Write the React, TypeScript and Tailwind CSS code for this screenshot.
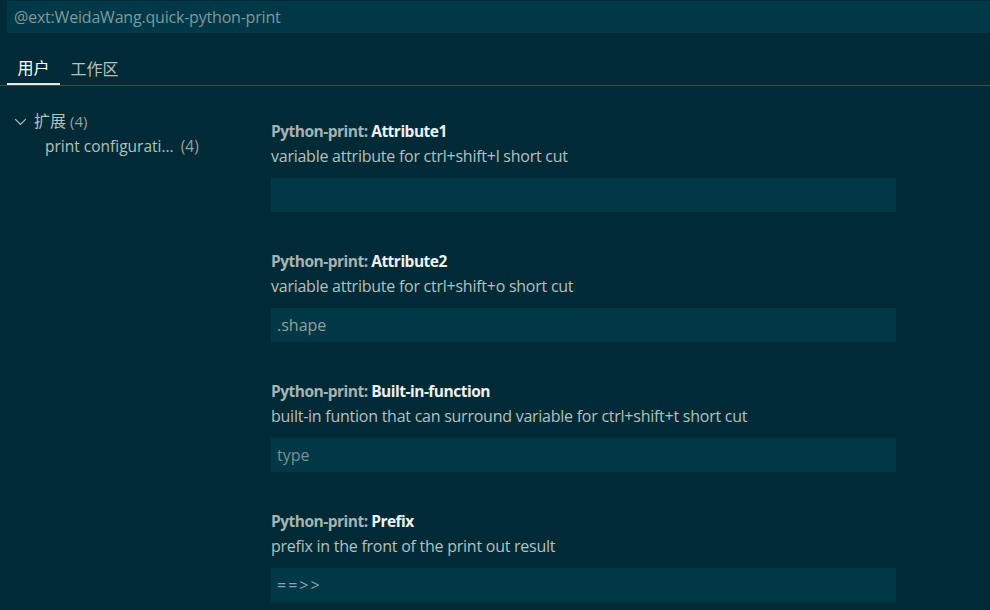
import React from 'react';

type Setting = {
  name: string;
  desc: string;
  value: string;
  placeholder?: boolean;
  mono?: boolean;
};

const SETTINGS: Setting[] = [
  { name: 'Attribute1', desc: 'variable attribute for ctrl+shift+l short cut', value: '' },
  { name: 'Attribute2', desc: 'variable attribute for ctrl+shift+o short cut', value: '.shape' },
  {
    name: 'Built-in-function',
    desc: 'built-in funtion that can surround variable for ctrl+shift+t short cut',
    value: 'type',
    placeholder: true,
  },
  { name: 'Prefix', desc: 'prefix in the front of the print out result', value: '==>>', mono: true },
];

const font = "font-['Open_Sans','Noto_Sans_CJK_SC',sans-serif]";

const App: React.FC = () => {
  return (
    <div className={`w-[990px] h-[610px] overflow-hidden bg-[#002b36] ${font} text-[16px]`}>
      {/* search */}
      <div className="pt-px pl-[7px]">
        <div className="h-[32px] bg-[#003847] flex items-center pl-[7px] text-[#7f9a9a] text-[16px] tracking-[-0.2px]">
          @ext:WeidaWang.quick-python-print
        </div>
      </div>

      {/* tabs */}
      <div className="mt-[19px] h-[34px] border-b border-[#4a4a4a] flex pl-[7px] text-[16px]">
        <div className="px-[10.5px] flex items-center h-full border-b-2 border-[#e6e6e6] -mb-px text-[#ffffff]">用户</div>
        <div className="px-[10.5px] flex items-center h-full text-[#b5c0c0]">工作区</div>
      </div>

      <div className="flex">
        {/* tree */}
        <div className="w-[271px] shrink-0 pt-[22px] text-[#b5c0c0]">
          <div className="h-[26px] flex items-center pl-[14px]">
            <svg width="13" height="13" viewBox="0 0 16 16" className="mr-[7px]">
              <path d="M1.5 5 L8 11.5 L14.5 5" fill="none" stroke="#b5c0c0" strokeWidth="1.5" />
            </svg>
            <span>扩展</span>
            <span className="ml-[4px] text-[#93a1a1] text-[15px]">(4)</span>
          </div>
          <div className="h-[26px] flex items-center pl-[45px] text-[15.5px]">
            <span>print configurati...</span>
            <span className="ml-[7px] text-[#93a1a1]">(4)</span>
          </div>
        </div>

        {/* settings */}
        <div className="w-[625px] pt-[35px] flex flex-col gap-[39px]">
          {SETTINGS.map((s) => (
            <div key={s.name}>
              <div className="h-[22px] flex items-center font-bold tracking-[-0.5px] text-[15.5px]">
                <span className="text-[#a7b3b3]">Python-print:&nbsp;</span>
                <span className="text-[#f0f0f0]">{s.name}</span>
              </div>
              <div className="h-[26px] flex items-center text-[#b5c0c0] tracking-[-0.25px] text-[16px]">{s.desc}</div>
              <div
                className={`mt-[9px] h-[34px] bg-[#003847] flex items-center pl-[6px] ${
                  s.placeholder ? 'text-[#7a9292]' : 'text-[#93a1a1]'
                } ${s.mono ? 'tracking-[2px]' : ''}`}
              >
                {s.value}
              </div>
            </div>
          ))}
        </div>
      </div>
    </div>
  );
};

export default App;
